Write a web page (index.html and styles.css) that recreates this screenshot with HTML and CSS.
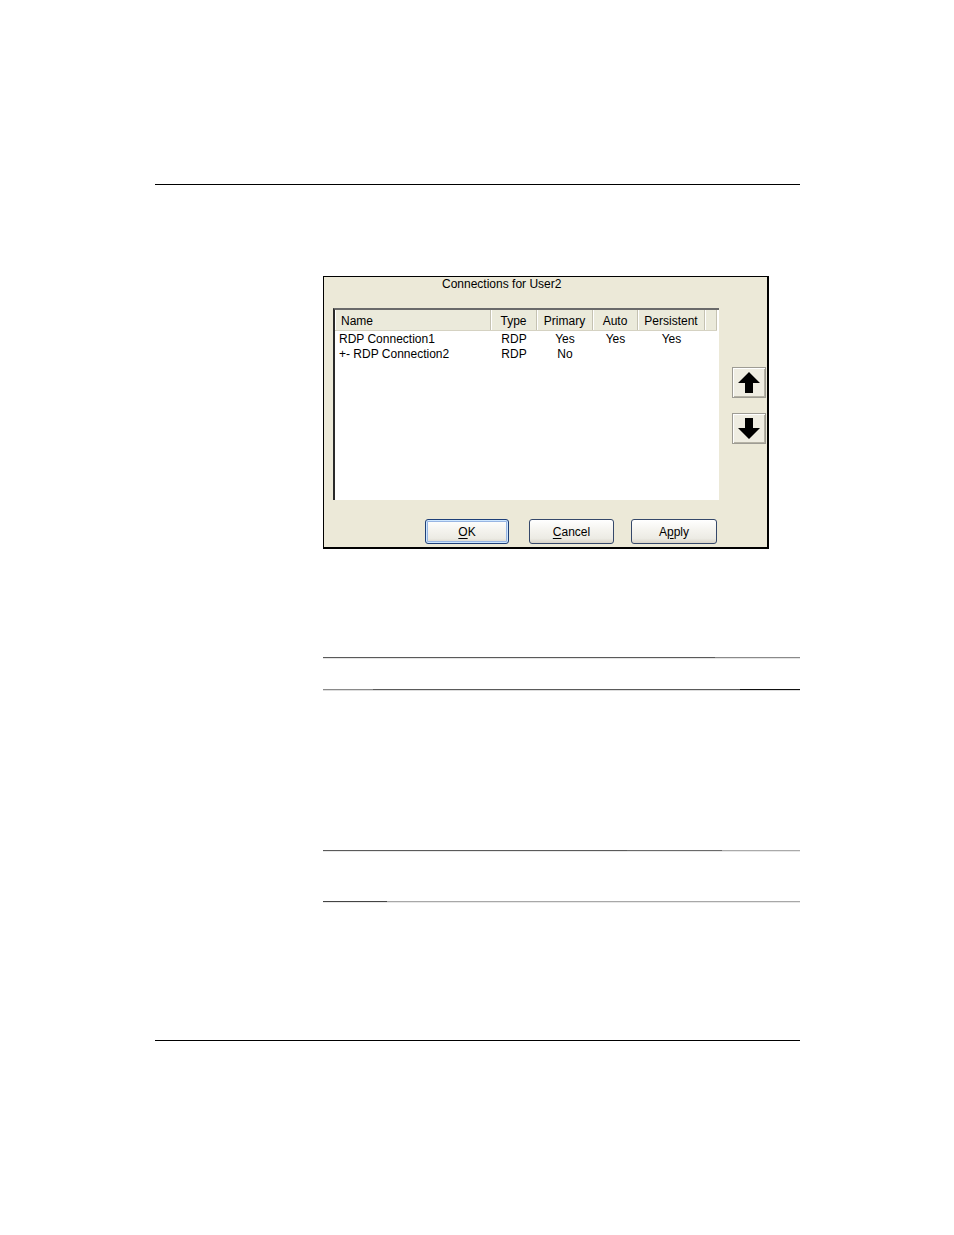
FILE: index.html
```html
<!DOCTYPE html>
<html>
<head>
<meta charset="utf-8">
<link rel="stylesheet" href="styles.css">
</head>
<body>
<div class="page">
  <div class="rule top-rule"></div>

  <div class="dialog">
    <div class="title">Connections for User2</div>
    <div class="list-row">
      <div class="listbox">
        <div class="header">
          <div class="hc c-name left">Name</div>
          <div class="hc c-type">Type</div>
          <div class="hc c-primary">Primary</div>
          <div class="hc c-auto">Auto</div>
          <div class="hc c-persist">Persistent</div>
          <div class="hc c-rest"></div>
        </div>
        <div class="rows">
          <div class="row">
            <div class="dc c-name left">RDP Connection1</div>
            <div class="dc c-type">RDP</div>
            <div class="dc c-primary">Yes</div>
            <div class="dc c-auto">Yes</div>
            <div class="dc c-persist">Yes</div>
          </div>
          <div class="row">
            <div class="dc c-name left">+- RDP Connection2</div>
            <div class="dc c-type">RDP</div>
            <div class="dc c-primary">No</div>
            <div class="dc c-auto"></div>
            <div class="dc c-persist"></div>
          </div>
        </div>
      </div>
      <div class="arrows">
        <div class="arrow-btn">
          <svg width="22" height="21" viewBox="0 0 22 21"><path d="M11 0 L22 11 L15 11 L15 21 L7 21 L7 11 L0 11 Z" fill="#000"/></svg>
        </div>
        <div class="arrow-btn">
          <svg width="22" height="21" viewBox="0 0 22 21"><path d="M11 21 L22 10 L15 10 L15 0 L7 0 L7 10 L0 10 Z" fill="#000"/></svg>
        </div>
      </div>
    </div>
    <div class="buttons">
      <div class="btn btn-ok default"><span><u>O</u>K</span></div>
      <div class="btn btn-cancel"><span><u>C</u>ancel</span></div>
      <div class="btn btn-apply"><span>A<u>p</u>ply</span></div>
    </div>
  </div>

  <div class="sep s1"></div>
  <div class="sep s2"></div>
  <div class="sep s3"></div>
  <div class="sep s4"></div>

  <div class="rule bottom-rule"></div>
</div>
</body>
</html>
```

FILE: styles.css
```css
html, body {
  margin: 0;
  padding: 0;
  background: #fff;
}

.page {
  width: 954px;
  height: 1235px;
  padding-top: 184px;
  box-sizing: border-box;
  overflow: hidden;
}

.rule {
  height: 1px;
  background: #000;
  margin-left: 155px;
  width: 645px;
}

.dialog {
  box-sizing: border-box;
  width: 446px;
  height: 273px;
  margin-top: 91px;
  margin-left: 323px;
  border: 1px solid #000;
  border-right-width: 2px;
  border-bottom-width: 2px;
  background: #ECE9D8;
  padding-left: 9px;
  font-family: "Liberation Sans", Arial, sans-serif;
  font-size: 12px;
  color: #000;
}

.title {
  height: 31px;
  line-height: 14px;
  padding-left: 109px;
}

.list-row {
  display: flex;
  gap: 13px;
}

.listbox {
  box-sizing: border-box;
  width: 386px;
  height: 192px;
  background: #fff;
  border-top: 2px solid #6a6a6a;
  border-left: 2px solid #2a2a2a;
}

.header {
  display: flex;
  height: 21px;
  box-sizing: border-box;
  background: #EBEADB;
  border-bottom: 1px solid #D5D2C2;
  width: 382px;
}

.hc {
  box-sizing: border-box;
  height: 20px;
  line-height: 22px;
  text-align: center;
  border-right: 1px solid #C5C2B2;
  box-shadow: inset 1px 0 #fff;
}

.c-name { width: 156px; }
.c-type { width: 46px; }
.c-primary { width: 56px; }
.c-auto { width: 45px; }
.c-persist { width: 67px; }
.c-rest { width: 12px; }

.hc.left { text-align: left; padding-left: 6px; }

.rows {
  padding-top: 1px;
}

.row {
  display: flex;
  height: 15px;
  line-height: 15px;
}

.dc {
  box-sizing: border-box;
  text-align: center;
  white-space: nowrap;
}

.dc.left { text-align: left; padding-left: 4px; }

.arrows {
  display: flex;
  flex-direction: column;
  gap: 15px;
  padding-top: 59px;
}

.arrow-btn {
  box-sizing: border-box;
  width: 34px;
  height: 31px;
  border: 1px solid #9E9C94;
  background: #EFEDE2;
  box-shadow: inset 1px 1px #fff, inset -1px -1px #B5B2A5;
  display: flex;
  align-items: center;
  justify-content: center;
}

.buttons {
  display: flex;
  margin-top: 19px;
  padding-left: 92px;
}

.btn {
  box-sizing: border-box;
  height: 25px;
  border: 1px solid #35486A;
  border-radius: 3px;
  background: linear-gradient(#FFFFFF, #F4F3EE 45%, #ECEBE4 80%, #D8D3C8);
  display: flex;
  align-items: center;
  justify-content: center;
}

.btn.default {
  box-shadow: inset 0 0 0 1px #CEE7FF, inset 0 0 0 2px #98B5E2;
  border-color: #1E3F77;
}

.btn-ok { width: 84px; }
.btn-cancel { width: 85px; margin-left: 20px; }
.btn-apply { width: 86px; margin-left: 17px; }

.btn span { line-height: 14px; }
.btn u { text-decoration-thickness: 1px; text-underline-offset: 2px; }

.sep {
  height: 2px;
  margin-left: 323px;
  width: 477px;
}

.s1 {
  margin-top: 108px;
  background:
    linear-gradient(to right, #5a5a5a 0 392px, #8a8a8a 392px) top / 100% 1px no-repeat,
    #e4e4e4;
}

.s2 {
  margin-top: 30px;
  background:
    linear-gradient(to right, #8a8a8a 0 50px, #5a5a5a 50px 417px, #111 417px) top / 100% 1px no-repeat,
    #dddddd;
}

.s3 {
  margin-top: 159px;
  background:
    linear-gradient(to right, #5a5a5a 0 304px, #6a6a6a 304px 399px, #aaaaaa 399px) top / 100% 1px no-repeat,
    #e8e8e8;
}

.s4 {
  margin-top: 49px;
  background:
    linear-gradient(to right, #444 0 64px, #a8a8a8 64px) top / 100% 1px no-repeat,
    #e8e8e8;
}

.bottom-rule {
  margin-top: 137px;
}
```
